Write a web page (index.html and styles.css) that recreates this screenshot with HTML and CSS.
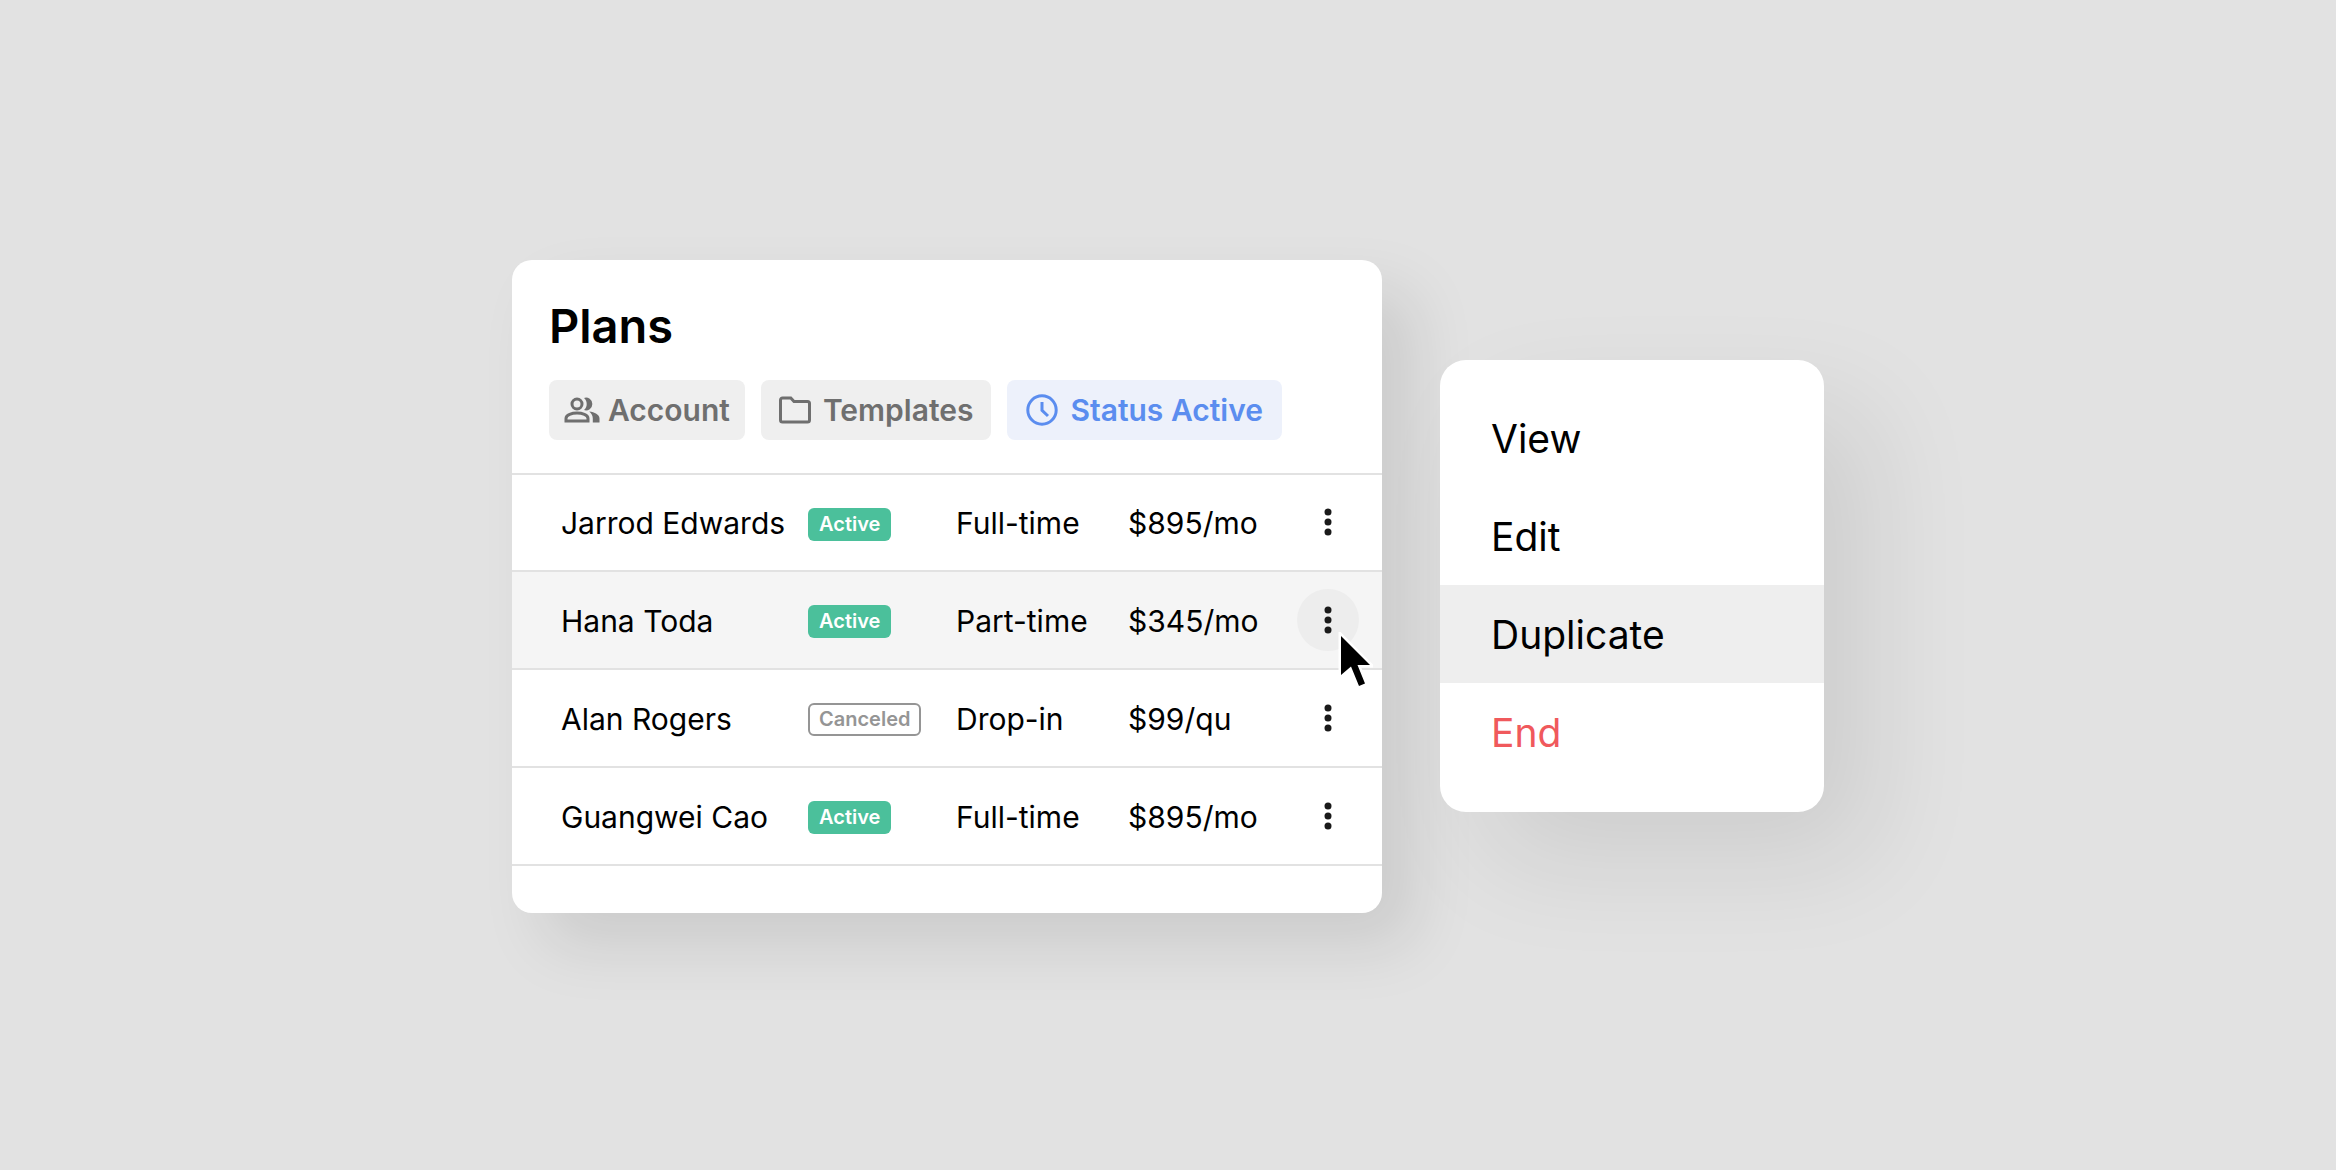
FILE: index.html
```html
<!DOCTYPE html>
<html lang="en">
<head>
    <meta charset="UTF-8">
    <meta name="viewport" content="width=device-width, initial-scale=1.0">
    <title>Plans</title>
    <link rel="stylesheet" href="styles.css">
</head>
<body>
    <main class="stage">
        <section class="card">
            <header class="card-header">
                <h1 class="title">Plans</h1>
                <div class="filters">
                    <button type="button" class="chip chip-compact">
                        <svg class="chip-icon icon-people" viewBox="0 0 36 28" aria-hidden="true">
                            <circle cx="13" cy="8" r="5" fill="none" stroke="currentColor" stroke-width="3"/>
                            <path d="M2 25v-2.600c0-3.600 6-5.400 11-5.400s11 1.800 11 5.400V25z" fill="none" stroke="currentColor" stroke-width="3"/>
                            <path d="M20 1.900a6.400 6.400 0 1 1 0 12.200c1.900-1.700 2.700-3.700 2.700-6.100S21.900 3.600 20 1.900z" fill="currentColor"/>
                            <path d="M25.200 15.600c5.400.8 10.300 3 10.300 7v3.900h-6.700v-4c0-2.700-1.300-5-3.600-6.900z" fill="currentColor"/>
                        </svg>
                        Account
                    </button>
                    <button type="button" class="chip">
                        <svg class="chip-icon icon-folder" viewBox="0 0 32 28" aria-hidden="true">
                            <path d="M3.500 2h8.300l3.200 3.500h13.500a2 2 0 0 1 2 2V24a2 2 0 0 1-2 2h-25a2 2 0 0 1-2-2V4a2 2 0 0 1 2-2z" fill="none" stroke="currentColor" stroke-width="3"/>
                        </svg>
                        Templates
                    </button>
                    <button type="button" class="chip chip-selected">
                        <svg class="chip-icon icon-clock" viewBox="0 0 32 32" aria-hidden="true">
                            <circle cx="16" cy="16" r="14.200" fill="none" stroke="currentColor" stroke-width="3"/>
                            <path d="M16 8v8.300l6 5.700" fill="none" stroke="currentColor" stroke-width="3"/>
                        </svg>
                        Status Active
                    </button>
                </div>
            </header>
            <table class="plans">
                <tbody>
                    <tr class="row-first">
                        <td class="name">Jarrod Edwards</td>
                        <td class="status"><span class="badge">Active</span></td>
                        <td class="type">Full-time</td>
                        <td class="price">$895/mo</td>
                        <td class="actions">
                            <button type="button" class="more" aria-label="Options for Jarrod Edwards">
                                <svg viewBox="0 0 8 28" aria-hidden="true"><circle cx="4" cy="4" r="3.500"/><circle cx="4" cy="14" r="3.500"/><circle cx="4" cy="24" r="3.500"/></svg>
                            </button>
                        </td>
                    </tr>
                    <tr class="row-hover">
                        <td class="name">Hana Toda</td>
                        <td class="status"><span class="badge">Active</span></td>
                        <td class="type">Part-time</td>
                        <td class="price">$345/mo</td>
                        <td class="actions">
                            <button type="button" class="more more-open" aria-label="Options for Hana Toda">
                                <svg viewBox="0 0 8 28" aria-hidden="true"><circle cx="4" cy="4" r="3.500"/><circle cx="4" cy="14" r="3.500"/><circle cx="4" cy="24" r="3.500"/></svg>
                            </button>
                            <svg class="cursor" viewBox="0 0 36 56" aria-hidden="true">
                                <path d="M4 4v39l10-8.500 8 19.500 6-2.500-7.500-18.500H33z" fill="#000" stroke="#fff" stroke-width="5" paint-order="stroke"/>
                            </svg>
                        </td>
                    </tr>
                    <tr>
                        <td class="name">Alan Rogers</td>
                        <td class="status"><span class="badge badge-canceled">Canceled</span></td>
                        <td class="type">Drop-in</td>
                        <td class="price">$99/qu</td>
                        <td class="actions">
                            <button type="button" class="more" aria-label="Options for Alan Rogers">
                                <svg viewBox="0 0 8 28" aria-hidden="true"><circle cx="4" cy="4" r="3.500"/><circle cx="4" cy="14" r="3.500"/><circle cx="4" cy="24" r="3.500"/></svg>
                            </button>
                        </td>
                    </tr>
                    <tr>
                        <td class="name">Guangwei Cao</td>
                        <td class="status"><span class="badge">Active</span></td>
                        <td class="type">Full-time</td>
                        <td class="price">$895/mo</td>
                        <td class="actions">
                            <button type="button" class="more" aria-label="Options for Guangwei Cao">
                                <svg viewBox="0 0 8 28" aria-hidden="true"><circle cx="4" cy="4" r="3.500"/><circle cx="4" cy="14" r="3.500"/><circle cx="4" cy="24" r="3.500"/></svg>
                            </button>
                        </td>
                    </tr>
                </tbody>
            </table>
        </section>

        <div class="menu" role="menu">
            <button type="button" role="menuitem" class="menu-item">View</button>
            <button type="button" role="menuitem" class="menu-item">Edit</button>
            <button type="button" role="menuitem" class="menu-item menu-item-hover">Duplicate</button>
            <button type="button" role="menuitem" class="menu-item menu-item-danger">End</button>
        </div>
    </main>
</body>
</html>
```
FILE: styles.css
```css
* {
    box-sizing: border-box;
}
body {
    margin: 0;
    padding-top: 2px;
    min-height: 100vh;
    display: flex;
    justify-content: center;
    align-items: center;
    background-color: #e2e2e2;
    color: #000;
    font-family: Inter, "Liberation Sans", Arial, sans-serif;
}
button {
    border: 0;
    margin: 0;
    background: none;
    color: inherit;
    font-family: inherit;
    cursor: pointer;
}
.stage {
    width: 100%;
    max-width: 1312px;
    display: grid;
    grid-template-columns: 870fr 384fr;
    gap: 58px;
    align-items: center;
}

/* Plans card */
.card {
    background-color: #fff;
    border-radius: 20px;
    padding-bottom: 47px;
    box-shadow: 32px 32px 64px rgba(0,0,0,0.1);
}
.card-header {
    padding: 36px 37px 33px;
    border-bottom: 2px solid #e2e2e2;
}
.title {
    margin: 0 0 24px;
    font-size: 47px;
    line-height: 60px;
    font-weight: 600;
}
.filters {
    display: flex;
    gap: 16px;
}
.chip {
    display: flex;
    align-items: center;
    gap: 12px;
    height: 60px;
    padding: 0 18px;
    border-radius: 8px;
    background-color: #efefef;
    color: #6f6f6f;
    font-size: 30px;
    font-weight: 600;
    white-space: nowrap;
}
.chip-compact {
    gap: 8px;
    padding: 0 15px;
}
.chip-selected {
    padding: 0 19px;
    background-color: #edf1fb;
    color: #5b8def;
}
.chip-icon {
    flex: none;
}
.icon-people {
    width: 36px;
    height: 28px;
}
.icon-folder {
    width: 32px;
    height: 28px;
}
.icon-clock {
    width: 32px;
    height: 32px;
}

/* Table */
.plans {
    width: 100%;
    border-collapse: collapse;
    table-layout: fixed;
    font-size: 30px;
}
.plans td {
    height: 98px;
    padding: 2px 0 0;
    border-bottom: 2px solid #e2e2e2;
    white-space: nowrap;
}
.plans .row-first td {
    height: 96px;
}
.plans .name {
    width: 296px;
    padding-left: 49px;
}
.plans .status {
    width: 148px;
    padding-top: 0;
}
.type {
    width: 172px;
}
.plans .actions {
    position: relative;
    padding: 0 23px 0 0;
    text-align: right;
}
.row-hover {
    background-color: #f5f5f5;
}
.badge {
    display: inline-block;
    vertical-align: middle;
    padding: 0 11px;
    border-radius: 6px;
    background-color: #4bc09b;
    color: #fff;
    font-size: 20px;
    line-height: 33px;
    font-weight: 600;
}
.badge-canceled {
    padding: 0 9px;
    border: 2px solid #959595;
    background-color: #fff;
    color: #959595;
    line-height: 29px;
}
.more {
    width: 62px;
    height: 62px;
    padding: 0;
    border-radius: 50%;
    vertical-align: middle;
}
.more svg {
    display: block;
    width: 8px;
    height: 28px;
    margin: 0 auto;
    fill: #1a1a1a;
}
.more-open {
    background-color: #ededed;
}
.cursor {
    position: absolute;
    top: 60px;
    right: 9px;
    width: 36px;
    height: 56px;
    z-index: 1;
}

/* Row menu */
.menu {
    display: flex;
    flex-direction: column;
    padding: 29px 0 31px;
    border-radius: 26px;
    background-color: #fff;
    box-shadow: 48px 48px 112px rgba(0,0,0,0.09);
}
.menu-item {
    height: 98px;
    padding: 0 51px;
    font-size: 39px;
    text-align: left;
}
.menu-item-hover {
    background-color: #eee;
}
.menu-item-danger {
    color: #f0595c;
}
```
